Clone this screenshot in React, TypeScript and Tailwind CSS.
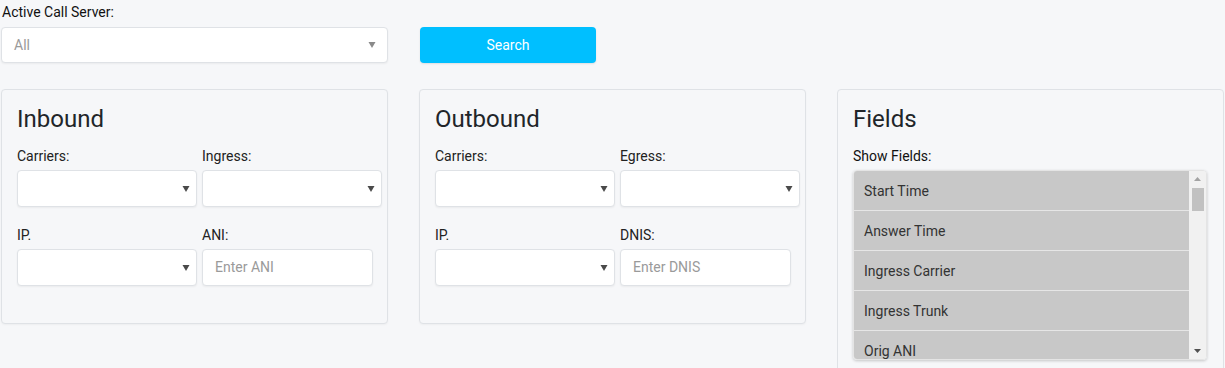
import React from "react";

const font = { fontFamily: "Roboto, 'Noto Sans', sans-serif" };

function Caret({ light = false }: { light?: boolean }) {
  return (
    <svg width="8" height="6" viewBox="0 0 8 6" className="shrink-0">
      <path d="M0.5 0 L7.5 0 L4 6 Z" fill={light ? "#8a8a8a" : "#4a4a4a"} />
    </svg>
  );
}

function SelectBox() {
  return (
    <div className="h-[37px] w-full bg-white border border-[#dfe2e6] rounded-[4px] shadow-[0_1px_2px_rgba(0,0,0,0.05)] flex items-center justify-end pr-[6px]">
      <Caret />
    </div>
  );
}

function InputBox({ placeholder }: { placeholder: string }) {
  return (
    <div className="h-[37px] w-[171px] bg-white border border-[#dfe2e6] rounded-[4px] shadow-[0_1px_2px_rgba(0,0,0,0.05)] flex items-center pl-[12px] text-[14px] text-[#9a9a9a]">
      {placeholder}
    </div>
  );
}

function Label({ children }: { children: React.ReactNode }) {
  return <div className="text-[14px] leading-[20px] text-[#222] mb-[4px]">{children}</div>;
}

function FilterPanel({
  title,
  second,
  third,
  placeholder,
}: {
  title: string;
  second: string;
  third: string;
  placeholder: string;
}) {
  return (
    <div className="border border-[#dfe2e6] rounded-[4px] bg-[#f6f7f9] shadow-[0_1px_2px_rgba(0,0,0,0.04)] pl-[15px] pt-[15px] pb-[37px]">
      <h2 className="text-[24px] leading-[29px] text-[#212529] font-normal mb-[12px]">{title}</h2>
      <div className="grid grid-cols-[180px_180px] gap-x-[5px] gap-y-[18px]">
        <div>
          <Label>Carriers:</Label>
          <SelectBox />
        </div>
        <div>
          <Label>{second}</Label>
          <SelectBox />
        </div>
        <div>
          <Label>IP.</Label>
          <SelectBox />
        </div>
        <div>
          <Label>{third}</Label>
          <InputBox placeholder={placeholder} />
        </div>
      </div>
    </div>
  );
}

const fields = ["Start Time", "Answer Time", "Ingress Carrier", "Ingress Trunk", "Orig ANI"];

function FieldsPanel() {
  return (
    <div className="border border-[#dfe2e6] rounded-t-[4px] bg-[#f6f7f9] pl-[15px] pr-[16px] pt-[15px] h-[290px]">
      <h2 className="text-[24px] leading-[29px] text-[#212529] font-normal mb-[12px]">Fields</h2>
      <div className="text-[14px] leading-[20px] text-[#111] mb-[4px]">Show Fields:</div>
      <div className="h-[190px] flex rounded-[4px] overflow-hidden shadow-[0_1px_3px_rgba(0,0,0,0.2)] border border-[#e4e4e4]">
        <div className="flex-1 overflow-hidden bg-[#c8c8c8]">
          {fields.map((f) => (
            <div
              key={f}
              className="h-[40px] border-b border-[#e6e6e6] flex items-center pt-[2px] pl-[10px] text-[14px] text-[#333]"
            >
              {f}
            </div>
          ))}
        </div>
        <div className="w-[17px] bg-[#f1f1f1] flex flex-col items-center">
          <svg width="17" height="17" viewBox="0 0 17 17">
            <path d="M5 10 L12 10 L8.5 6 Z" fill="#a3a3a3" />
          </svg>
          <div className="w-[12px] h-[23px] bg-[#c1c1c1]" />
          <div className="flex-1" />
          <svg width="17" height="17" viewBox="0 0 17 17">
            <path d="M5 7 L12 7 L8.5 11 Z" fill="#505050" />
          </svg>
        </div>
      </div>
    </div>
  );
}

export default function App() {
  return (
    <div style={font} className="w-[1225px] h-[368px] overflow-hidden bg-[#f6f7f9] pl-[1px]">
      <div className="text-[14px] leading-[20px] text-[#111] pt-[2px] pl-[1px] mb-[5px]">
        Active Call Server:
      </div>
      <div className="grid grid-cols-[387px_387px_387px] gap-x-[31px]">
        <div className="h-[36px] bg-white border border-[#dfe2e6] rounded-[4px] shadow-[0_1px_2px_rgba(0,0,0,0.05)] flex items-center justify-between pl-[12px] pr-[11px]">
          <span className="text-[14px] text-[#9a9a9a]">All</span>
          <Caret light />
        </div>
        <div className="pl-[1px]">
          <button className="h-[36px] w-[176px] bg-[#00bfff] rounded-[4px] text-white text-[14px] shadow-[0_1px_2px_rgba(0,0,0,0.1)]">
            Search
          </button>
        </div>
        <div />
      </div>
      <div className="grid grid-cols-[387px_387px_387px] gap-x-[31px] mt-[26px] items-start">
        <FilterPanel title="Inbound" second="Ingress:" third="ANI:" placeholder="Enter ANI" />
        <FilterPanel title="Outbound" second="Egress:" third="DNIS:" placeholder="Enter DNIS" />
        <FieldsPanel />
      </div>
    </div>
  );
}
